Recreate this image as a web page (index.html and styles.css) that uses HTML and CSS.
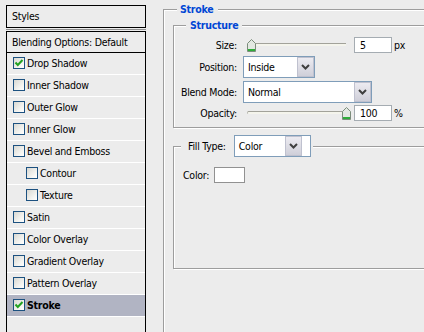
FILE: index.html
```html
<!DOCTYPE html>
<html lang="en">
<head>
  <meta charset="UTF-8">
  <title>Layer Style</title>
  <link rel="stylesheet" href="styles.css">
</head>
<body>
  <div class="dialog">
    <div class="side">
      <div class="side-title">Styles</div>
      <div class="side-rule"></div>
      <ul class="side-list">
        <li class="item item-head">Blending Options: Default</li>
        <li class="item"><span class="check on"><svg viewBox="0 0 10 10"><path d="M1.5 4.5 L3.8 7 L8.5 2"/></svg></span>Drop Shadow</li>
        <li class="item"><span class="check"></span>Inner Shadow</li>
        <li class="item"><span class="check"></span>Outer Glow</li>
        <li class="item"><span class="check"></span>Inner Glow</li>
        <li class="item"><span class="check"></span>Bevel and Emboss</li>
        <li class="item sub"><span class="check"></span>Contour</li>
        <li class="item sub"><span class="check"></span>Texture</li>
        <li class="item"><span class="check"></span>Satin</li>
        <li class="item"><span class="check"></span>Color Overlay</li>
        <li class="item"><span class="check"></span>Gradient Overlay</li>
        <li class="item"><span class="check"></span>Pattern Overlay</li>
        <li class="item active"><span class="check on"><svg viewBox="0 0 10 10"><path d="M1.5 4.5 L3.8 7 L8.5 2"/></svg></span>Stroke</li>
      </ul>
    </div>

    <div class="main">
      <fieldset class="group stroke">
        <legend>Stroke</legend>

        <fieldset class="group structure">
          <legend>Structure</legend>
          <div class="field">
            <span class="lbl">Size:</span>
            <div class="slider">
              <div class="track"></div>
              <svg class="thumb" style="left: 0px;" viewBox="0 0 9 13"><path d="M0.5 4.5 L4.5 0.5 L8.5 4.5 L8.5 12.5 L0.5 12.5 Z"/><rect x="1" y="10" width="7" height="2"/></svg>
            </div>
            <div class="num">5</div>
            <span class="unit">px</span>
          </div>
          <div class="field">
            <span class="lbl">Position:</span>
            <div class="select pos">Inside<span class="drop"><svg viewBox="0 0 9 6"><polyline points="1,1 4.5,4.5 8,1"/></svg></span></div>
          </div>
          <div class="field">
            <span class="lbl">Blend Mode:</span>
            <div class="select mode">Normal<span class="drop"><svg viewBox="0 0 9 6"><polyline points="1,1 4.5,4.5 8,1"/></svg></span></div>
          </div>
          <div class="field opacity">
            <span class="lbl">Opacity:</span>
            <div class="slider">
              <div class="track full"></div>
              <svg class="thumb" style="left: 95px;" viewBox="0 0 9 13"><path d="M0.5 4.5 L4.5 0.5 L8.5 4.5 L8.5 12.5 L0.5 12.5 Z"/><rect x="1" y="10" width="7" height="2"/></svg>
            </div>
            <div class="num">100</div>
            <span class="unit">%</span>
          </div>
        </fieldset>

        <fieldset class="group fill">
          <legend>
            <span>Fill Type:</span>
            <div class="select type">Color<span class="drop"><svg viewBox="0 0 9 6"><polyline points="1,1 4.5,4.5 8,1"/></svg></span></div>
          </legend>
          <div class="field">
            <span>Color:</span>
            <div class="swatch"></div>
          </div>
        </fieldset>
      </fieldset>
    </div>
  </div>
</body>
</html>
```

FILE: styles.css
```css
body {
  margin: 0;
  background: #ececec;
  font: 10.5px "DejaVu Sans Condensed", "DejaVu Sans", sans-serif;
  letter-spacing: -0.25px;
  color: #000;
  overflow: hidden;
}

.dialog {
  display: flex;
  height: 332px;
  overflow: hidden;
}

/* left list */
.side {
  width: 140px;
  margin-left: 6px;
  padding-top: 5px;
  display: flex;
  flex-direction: column;
  flex-shrink: 0;
}
.side-title {
  height: 21px;
  line-height: 20px;
  padding-left: 5px;
  border: 1px solid #000;
}
.side-rule {
  height: 1px;
  margin: 1px 0;
  background: #8f8f8f;
}
.side-list {
  flex: 1;
  margin: 0;
  padding: 0;
  list-style: none;
  border: 1px solid #000;
  border-bottom: 0;
}
.item {
  height: 21px;
  display: flex;
  align-items: center;
  padding-left: 6px;
  padding-bottom: 1px;
  box-sizing: border-box;
  height: 22px;
  border-bottom: 1px solid #fff;
}
.item-head {
  height: 21px;
  padding-left: 5px;
  border-bottom-color: #000;
}
.item.sub {
  padding-left: 19px;
}
.item.active {
  background: #b1b4c3;
  font-weight: bold;
}
.check {
  width: 12px;
  height: 12px;
  box-sizing: border-box;
  margin-right: 2px;
  border: 1px solid #1c5180;
  background: linear-gradient(135deg, #d8d8d2, #f6f6f3 70%, #fff);
}
.check svg {
  display: block;
  width: 10px;
  height: 10px;
  fill: none;
  stroke: #21a121;
  stroke-width: 2;
}

/* right side */
.main {
  flex: 1;
  min-width: 0;
  height: 332px;
  overflow: hidden;
}
.group {
  margin: 0;
  padding: 0;
  min-width: 0;
  border: 1px solid #9d9d9d;
  box-shadow: inset 1px 1px #fff, 1px 1px #fff;
}
.group legend {
  background: #ececec;
  color: #0046d5;
  font-weight: bold;
  line-height: 14px;
  padding: 0 3px;
}
.stroke {
  margin: 2px -30px 0 17px;
  padding-left: 9px;
  height: 340px;
}
.stroke > legend {
  margin-left: 4px;
  padding: 0 5px 0 3px;
}
.structure {
  margin: 2px -30px 0 0;
  padding: 5px 0 6px 0;
}
.structure > legend {
  margin-left: 12px;
  padding: 0 4px;
}

.field {
  display: flex;
  align-items: center;
}
.field + .field {
  margin-top: 3px;
}
.field.opacity {
  margin-top: 2px;
}
.lbl {
  width: 63px;
  margin-right: 6px;
  text-align: right;
}

.slider {
  position: relative;
  width: 99px;
  height: 16px;
  margin-left: 4px;
}
.track {
  margin: 6px 0 0 3px;
  height: 3px;
  box-sizing: border-box;
  background: #f4f4ec;
  border-top: 1px solid #a2a29a;
  border-left: 1px solid #b8b8b0;
  border-radius: 2px 0 0 2px;
}
.track.full {
  margin-left: 0;
}
.thumb {
  position: absolute;
  top: 2px;
  width: 9px;
  height: 13px;
}
.thumb path {
  fill: #e3e8e2;
  stroke: #7b8c7b;
}
.thumb rect {
  fill: #2fae3a;
}

.num {
  width: 38px;
  height: 16px;
  box-sizing: border-box;
  margin-left: 8px;
  padding-left: 5px;
  line-height: 14px;
  background: #fff;
  border: 1px solid #a5acb2;
}
.unit {
  margin-left: 2px;
}

.select {
  display: flex;
  align-items: center;
  height: 22px;
  box-sizing: border-box;
  padding-left: 4px;
  background: #fff;
  border: 1px solid #7f9db9;
}
.select.pos {
  width: 72px;
}
.select.mode {
  width: 129px;
}
.select.type {
  width: 77px;
}
.drop {
  margin-left: auto;
  width: 17px;
  height: 20px;
  box-sizing: border-box;
  display: flex;
  align-items: center;
  justify-content: center;
  border: 1px solid #bfc1cf;
  background: linear-gradient(#ecebf1, #cfcfd9);
}
.drop svg {
  width: 9px;
  height: 6px;
  fill: none;
  stroke: #3f3f3f;
  stroke-width: 2;
}

.fill {
  margin: 7px -30px 0 0;
  padding: 10px 0 85px 9px;
}
.fill > legend {
  display: flex;
  align-items: center;
  margin-left: -2px;
  padding: 0 2px 0 7px;
  color: #000;
  font-weight: normal;
}
.fill > legend span {
  margin-right: 8px;
}
.swatch {
  width: 31px;
  height: 16px;
  box-sizing: border-box;
  margin-left: 5px;
  background: #fff;
  border: 1px solid #919191;
}
```
